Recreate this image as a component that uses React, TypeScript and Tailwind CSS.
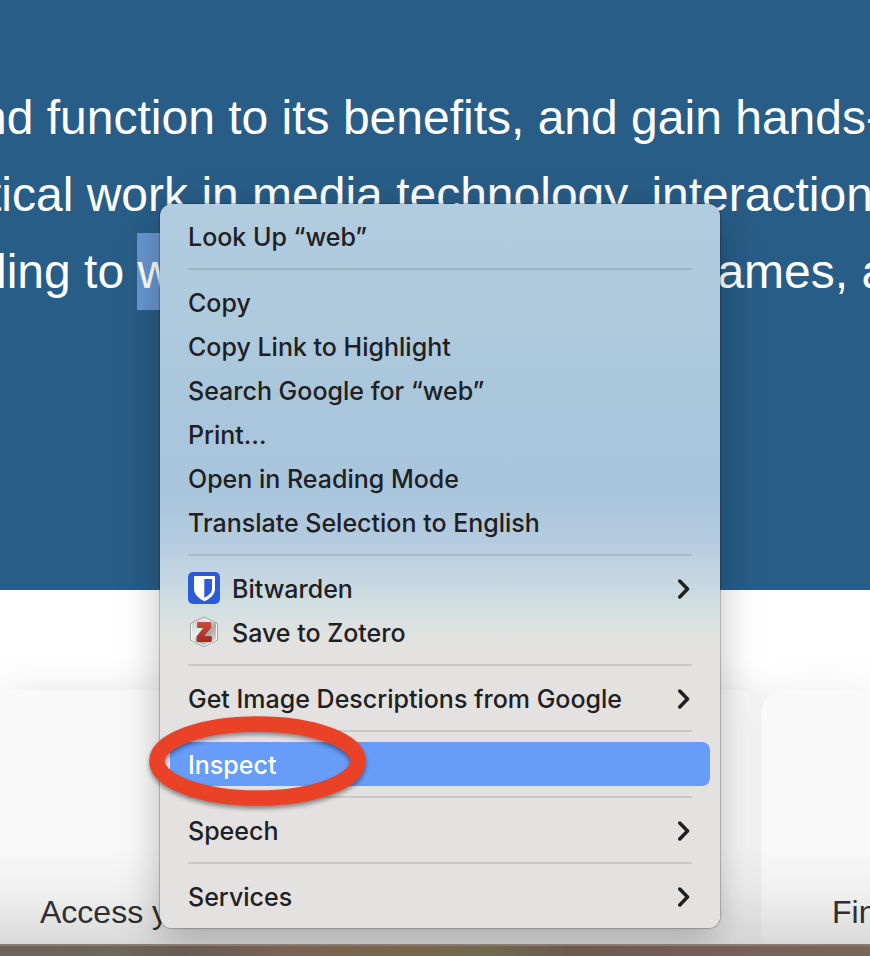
import type { ReactNode } from "react";

const heroLine = "flex h-[77px] items-center whitespace-nowrap";

function Separator() {
  return <div role="separator" className="mx-[18px] my-[10px] h-[2px] bg-black/11" />;
}

function Chevron() {
  return (
    <svg className="ml-auto" width="14" height="22" viewBox="0 0 14 22" fill="none" stroke="currentColor" strokeWidth="3.500" strokeLinecap="round" strokeLinejoin="round" aria-hidden="true">
      <path d="M1.750 4 L9.500 12 L1.750 20" />
    </svg>
  );
}

function BitwardenIcon() {
  return (
    <svg width="32" height="32" viewBox="0 0 32 32" aria-hidden="true">
      <rect width="32" height="32" rx="5" fill="#2d5bd7" />
      <path d="M7 4h19a1 1 0 0 1 1 1v12c0 5.800-5.500 9.800-10.500 12.300C11.500 26.800 6 22.800 6 17V5a1 1 0 0 1 1-1z" fill="#fff" />
      <path d="M16.300 7H24v10c0 4-3.700 6.600-7.700 8.900z" fill="#2d5bd7" />
    </svg>
  );
}

function ZoteroIcon() {
  return (
    <svg width="32" height="32" viewBox="0 0 32 32" aria-hidden="true">
      <defs>
        <linearGradient id="zoteroSteel" x1="0" y1="0" x2="1" y2="1">
          <stop offset="0" stopColor="#c9c9c9" />
          <stop offset="0.400" stopColor="#ececec" />
          <stop offset="0.600" stopColor="#a9a9a9" />
          <stop offset="1" stopColor="#f0f0f0" />
        </linearGradient>
        <linearGradient id="zoteroRed" x1="0" y1="0" x2="0" y2="1">
          <stop offset="0" stopColor="#d04a3b" />
          <stop offset="1" stopColor="#a32a22" />
        </linearGradient>
      </defs>
      <path d="M16 0.800 L29.500 7.500 V24 L16 30.800 L2.500 24 V7.500Z" fill="url(#zoteroSteel)" stroke="#a8a8a8" strokeWidth="1" />
      <path d="M3.500 8 V23.500 L16 29.500 L28.500 23.500 V8" fill="none" stroke="#f6f6f6" strokeWidth="1" />
      <path d="M10 6H22.500Q23.500 6 23.300 7V11.500L16.300 20H22.800Q23.800 20 23.800 21V25Q23.800 26 22.800 26H9.500Q8.500 26 8.500 25V20.500L15.300 12H10Q9 12 9 11V7Q9 6 10 6Z" fill="url(#zoteroRed)" />
    </svg>
  );
}

type ItemProps = {
  children: ReactNode;
  icon?: ReactNode;
  submenu?: boolean;
  active?: boolean;
};

function Item({ children, icon, submenu = false, active = false }: ItemProps) {
  return (
    <button
      type="button"
      role="menuitem"
      className={
        active
          ? "flex h-11 w-full items-center gap-3 rounded-lg bg-[#679cf8] px-[18px] text-left text-white"
          : "flex h-11 w-full items-center gap-3 rounded-lg px-[18px] text-left"
      }
    >
      {icon}
      <span className="pt-[2px]">{children}</span>
      {submenu && <Chevron />}
    </button>
  );
}

function ContextMenu() {
  return (
    <div
      role="menu"
      className="absolute top-[204px] left-[160px] w-[560px] rounded-xl bg-[linear-gradient(180deg,#b1cbdf_0px,#afcadd_120px,#aac6db_190px,#a9c5dc_290px,#b4cbdf_335px,#c3d5e2_370px,#d3dfe1_405px,#dfe2e0_430px,#e4e2e1_450px)] p-[10px] font-['Inter',sans-serif] text-[25px] leading-[30px] font-[450] whitespace-nowrap text-[#1f2022] shadow-[0_0_1px_1px_rgba(0,0,0,0.22),0_12px_40px_rgba(0,0,0,0.26)]"
    >
      <Item>Look Up “web”</Item>
      <Separator />
      <Item>Copy</Item>
      <Item>Copy Link to Highlight</Item>
      <Item>Search Google for “web”</Item>
      <Item>Print…</Item>
      <Item>Open in Reading Mode</Item>
      <Item>Translate Selection to English</Item>
      <Separator />
      <Item icon={<BitwardenIcon />} submenu>Bitwarden</Item>
      <Item icon={<ZoteroIcon />}>Save to Zotero</Item>
      <Separator />
      <Item submenu>Get Image Descriptions from Google</Item>
      <Separator />
      <Item active>Inspect</Item>
      <Separator />
      <Item submenu>Speech</Item>
      <Separator />
      <Item submenu>Services</Item>
    </div>
  );
}

export default function App() {
  return (
    <div className="relative flex min-h-screen flex-col overflow-hidden bg-white font-['Liberation_Sans',Arial,sans-serif]">
      <header className="bg-[#285d87] pt-[79px] pb-[280px] text-[48px] leading-[77px] text-white">
        <p className={`${heroLine} -ml-5`}>nd function to its benefits, and gain hands-</p>
        <p className={`${heroLine} -ml-3`}>tical work in media technology, interaction</p>
        <p className={`${heroLine} -ml-1`}>
          <span className="whitespace-pre">ling to </span>
          <mark className="mr-[492px] w-[88px] shrink-0 bg-[#6896d0] text-white">web</mark>
          <span>ames, a</span>
        </p>
      </header>

      <main className="flex grow pt-[100px] text-[32px] leading-[40px] text-[#333]">
        <section className="w-[761px] shrink-0 rounded-tr-[24px] bg-[#f9f9f9] px-10 pt-[202px] pb-3 shadow-[0_0_40px_rgba(0,0,0,0.1)]">
          Access y
        </section>
        <section className="z-0 grow rounded-tl-[24px] bg-[#f9f9f9] pt-[202px] pb-3 pl-[71px] whitespace-nowrap shadow-[0_0_40px_rgba(0,0,0,0.08)]">
          Fin
        </section>
      </main>

      <div className="pointer-events-none absolute right-0 bottom-3 left-0 h-[100px] bg-[linear-gradient(180deg,rgba(0,0,0,0)_0%,rgba(0,0,0,0.04)_50%,rgba(0,0,0,0.13)_100%)]" />
      <footer className="z-10 h-3 shrink-0 border-t-2 border-[#8a7c72] bg-[linear-gradient(90deg,#6d625c_0%,#6e6658_14%,#675c53_21%,#7b6252_33%,#776648_49%,#70694e_56%,#6d594e_66%,#765d57_78%,#79665a_100%)]" />

      <ContextMenu />
      <svg className="pointer-events-none absolute top-[709px] left-[143px] drop-shadow-[0_3px_2px_rgba(0,0,0,0.4)]" width="230" height="104" viewBox="0 0 230 104" fill="none" aria-hidden="true">
        <ellipse cx="114.500" cy="52" rx="100.500" ry="37" stroke="#ea4226" strokeWidth="15.500" />
      </svg>
    </div>
  );
}
